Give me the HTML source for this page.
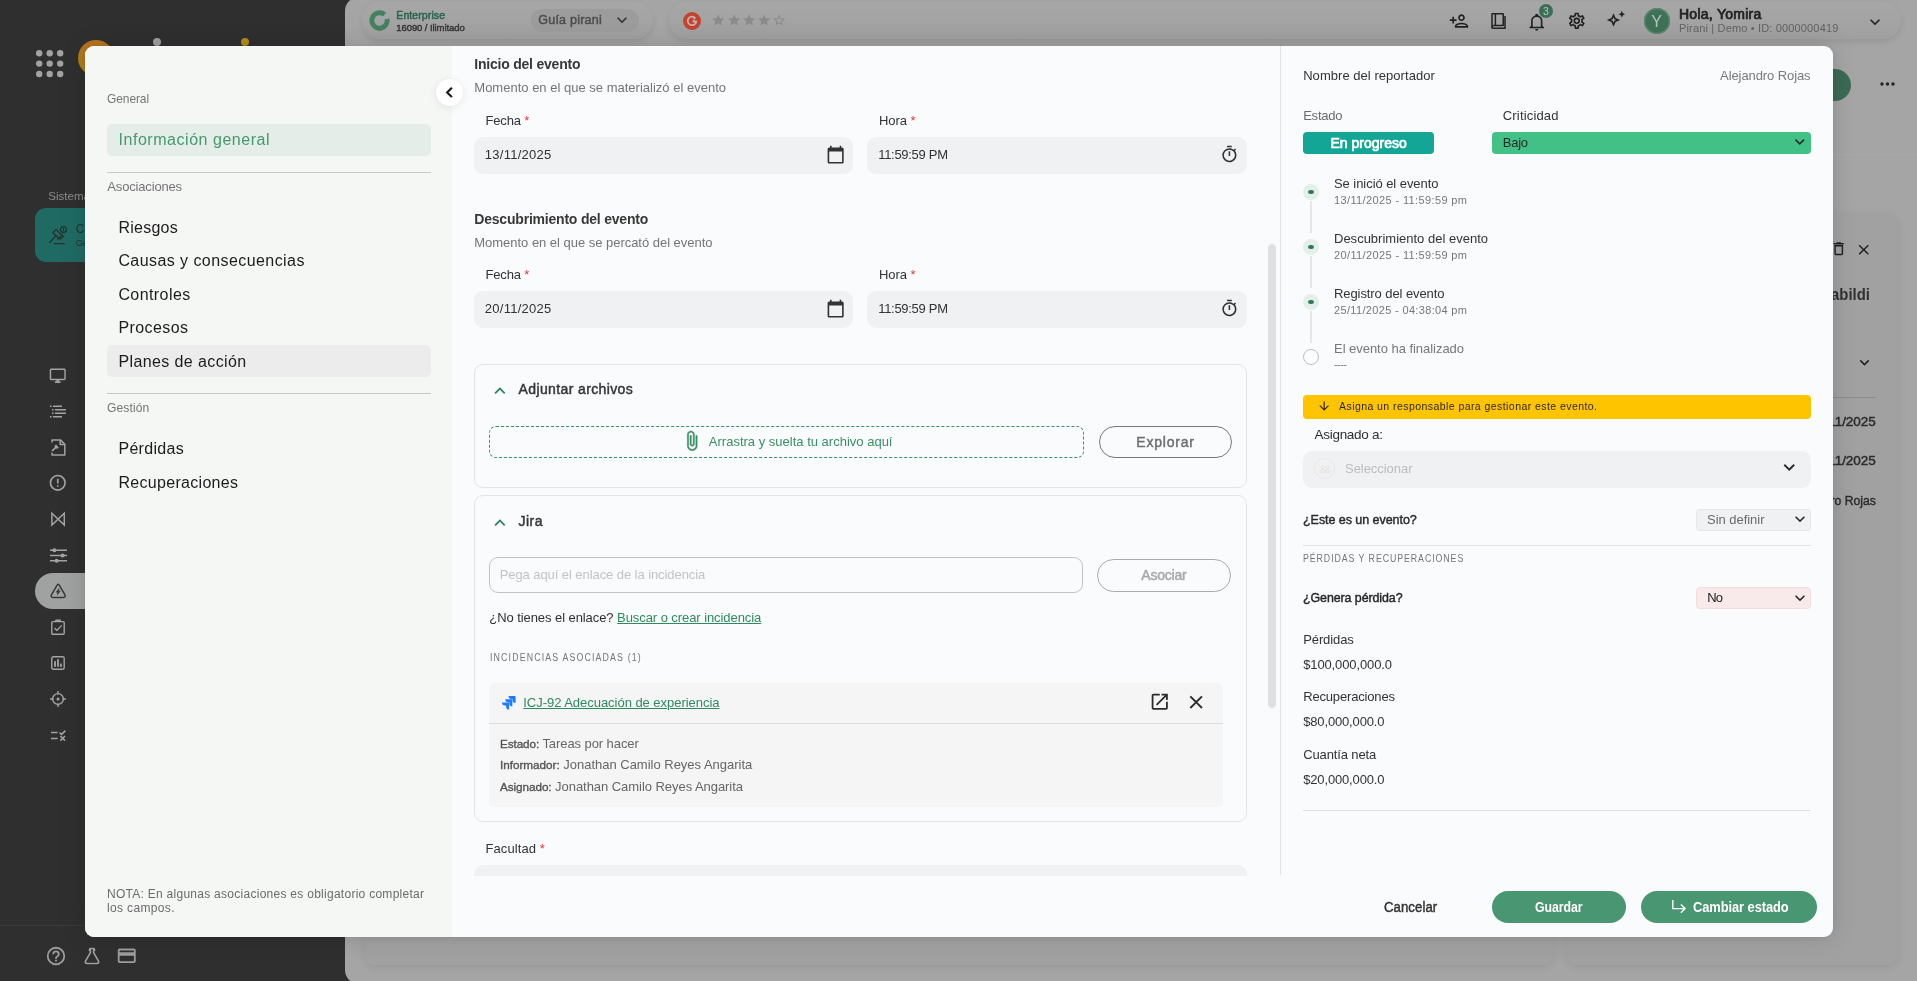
<!DOCTYPE html>
<html lang="es"><head><meta charset="utf-8"><title>Pirani - Evento</title>
<style>
*{box-sizing:border-box;margin:0;padding:0}
html,body{width:1917px;height:981px;overflow:hidden;background:#2f2f2f}
body{position:relative;font-family:"Liberation Sans",sans-serif;-webkit-font-smoothing:antialiased}
#app{position:absolute;left:0;top:0;width:1917px;height:981px;will-change:transform}
.layer{position:absolute;left:0;top:0;width:1917px;height:981px}
.t{position:absolute;white-space:nowrap;line-height:1;display:block}
.b{position:absolute}
.i{position:absolute;display:block;overflow:visible}
.r{color:#e53935}
a{color:inherit}
</style></head>
<body>
<div id="app">
<!-- ===== background app (dimmed by overlay) ===== -->
<div id="bg" class="layer" aria-hidden="true">
<div class="b" style="left:345px;top:-3px;width:1572px;height:987px;background:#a5a5a5;border-radius:14px 0 0 14px"></div>
<svg class="i" style="left:35.70px;top:50.00px;width:27.4px;height:27.2px;" viewBox="0 0 27.4 27.2"><g fill="#a2a2a2"><circle cx="3.2" cy="3.2" r="3.2"/><circle cx="13.7" cy="3.2" r="3.2"/><circle cx="24.2" cy="3.2" r="3.2"/><circle cx="3.2" cy="13.6" r="3.2"/><circle cx="13.7" cy="13.6" r="3.2"/><circle cx="24.2" cy="13.6" r="3.2"/><circle cx="3.2" cy="24" r="3.2"/><circle cx="13.7" cy="24" r="3.2"/><circle cx="24.2" cy="24" r="3.2"/></g></svg>
<div class="b" style="left:78px;top:40px;width:36px;height:36px;border-radius:50%;background:linear-gradient(180deg,#b8711f 0%,#b07a1c 45%,#a87e18 100%)"></div>
<div class="b" style="left:152.8px;top:37.6px;width:8.0px;height:8.0px;border-radius:50%;background:#a0a0a0"></div>
<div class="b" style="left:240.5px;top:37.6px;width:8.0px;height:8.0px;border-radius:50%;background:#b38c1d"></div>
<div class="b" style="left:35px;top:208px;width:295px;height:54px;background:#1f6b63;border-radius:11px"></div>
<svg class="i" style="left:49.20px;top:226.00px;width:18px;height:18px;" viewBox="0 0 18 18"><g fill="none" stroke="#26332f" stroke-width="1.3" stroke-linejoin="round" stroke-linecap="round"><path d="M0.6 16.6 L6.4 10.2"/><path d="M5 17.6 H15.4"/><path d="M7.2 3.6 L14.4 10.6 L11 13.2 L3.8 6.6 Z"/><path d="M8.6 13 L13 9.2"/><circle cx="14.4" cy="3.6" r="3"/><path d="M14.4 2.4 V4.8"/></g></svg>
<svg class="i" style="left:49.25px;top:366.55px;width:17.5px;height:17.5px;" viewBox="0 0 24 24"><path fill="#a3a3a3" d="M21,16H3V4H21M21,2H3C1.89,2 1,2.89 1,4V16A2,2 0 0,0 3,18H10V20H8V22H16V20H14V18H21A2,2 0 0,0 23,16V4C23,2.89 22.1,2 21,2Z"/></svg>
<svg class="i" style="left:49.50px;top:404.50px;width:17px;height:13px;" viewBox="0 0 17 13"><g stroke="#a3a3a3" stroke-width="1.5" fill="none"><path d="M3 1.2H12M5 4.7H16M5 8.2H16M3 11.7H12"/></g><g fill="#a3a3a3"><rect x="0" y="0.5" width="1.6" height="1.5"/><rect x="2" y="4" width="1.6" height="1.5"/><rect x="2" y="7.5" width="1.6" height="1.5"/><rect x="0" y="11" width="1.6" height="1.5"/></g></svg>
<svg class="i" style="left:50.50px;top:438.50px;width:15px;height:17px;" viewBox="0 0 15 17"><g stroke="#a3a3a3" stroke-width="1.5" fill="none" stroke-linejoin="round"><path d="M1 3.4V0.9H9.4L13.8 5.2V16H1V13.6"/><path d="M9.2 1V5.4H13.6"/></g><path fill="#a3a3a3" d="M0.4 11.6 L4 8 L3.2 7.2 L5 5.6 L7.8 8.4 L6 10 L5.2 9.2 L1.6 12.6 Z"/></svg>
<svg class="i" style="left:48.25px;top:473.25px;width:19.5px;height:19.5px;" viewBox="0 0 24 24"><path fill="#a3a3a3" d="M11,15H13V17H11V15M11,7H13V13H11V7M12,2C6.47,2 2,6.5 2,12A10,10 0 0,0 12,22A10,10 0 0,0 22,12A10,10 0 0,0 12,2M12,20A8,8 0 0,1 4,12A8,8 0 0,1 12,4A8,8 0 0,1 20,12A8,8 0 0,1 12,20Z"/></svg>
<svg class="i" style="left:50.90px;top:511.90px;width:14.2px;height:14.2px;" viewBox="0 0 14.2 14.2"><path d="M0.9 1.2 L13.3 13 V1.2 L0.9 13 Z" fill="none" stroke="#a3a3a3" stroke-width="1.5" stroke-linejoin="miter"/></svg>
<svg class="i" style="left:49.50px;top:547.50px;width:17px;height:15px;" viewBox="0 0 17 15"><g stroke="#a3a3a3" stroke-width="1.5"><path d="M0 2.2H17M0 7.5H17M0 12.8H17"/></g><g fill="#a3a3a3"><circle cx="4.4" cy="2.2" r="2"/><circle cx="12.6" cy="7.5" r="2"/><circle cx="6.6" cy="12.8" r="2"/></g></svg>
<div class="b" style="left:34.8px;top:572.8px;width:85.2px;height:36.10000000000002px;background:#a0a2a1;border-radius:18px 0 0 18px"></div>
<svg class="i" style="left:49.90px;top:583.20px;width:16.4px;height:15.4px;" viewBox="0 0 16.4 15.4"><path d="M7 2.3 Q8.2 0.4 9.4 2.3 L15 12 Q15.9 14.3 13.6 14.4 H2.8 Q0.5 14.3 1.4 12 Z" fill="none" stroke="#383838" stroke-width="1.5" stroke-linejoin="round"/><path d="M9 5.6 L6.2 9.2 H8 L7.3 11.9 L10.2 8.1 H8.4 Z" fill="#383838" stroke="#383838" stroke-width="0.6" stroke-linejoin="round"/></svg>
<svg class="i" style="left:51.00px;top:619.00px;width:14px;height:16px;" viewBox="0 0 14 16"><g stroke="#a3a3a3" stroke-width="1.4" fill="none" stroke-linejoin="round"><rect x="0.8" y="2.6" width="12.4" height="12.6" rx="1"/><path d="M4.8 2.4 V1.2 H9.2 V2.4"/><path d="M3.6 9 L6 11.4 L10.6 6.4"/></g></svg>
<svg class="i" style="left:51.00px;top:656.00px;width:14px;height:14px;" viewBox="0 0 14 14"><rect x="0.8" y="0.8" width="12.4" height="12.4" rx="1.4" fill="none" stroke="#a3a3a3" stroke-width="1.4"/><g fill="#a3a3a3"><rect x="3.2" y="5.2" width="1.8" height="5.6"/><rect x="6.1" y="3.2" width="1.8" height="7.6"/><rect x="9" y="7.6" width="1.8" height="3.2"/></g></svg>
<svg class="i" style="left:50.00px;top:691.00px;width:16px;height:16px;" viewBox="0 0 16 16"><g stroke="#a3a3a3" stroke-width="1.4" fill="none"><circle cx="8" cy="8" r="5.4"/><path d="M8 0V3.6M8 12.4V16M0 8H3.6M12.4 8H16"/></g><circle cx="8" cy="8" r="1.5" fill="#a3a3a3"/></svg>
<svg class="i" style="left:50.50px;top:729.50px;width:15px;height:11px;" viewBox="0 0 15 11"><g stroke="#a3a3a3" stroke-width="1.5" fill="none"><path d="M0 2.6H6.6M0 8.4H6.6"/><path d="M8.6 2.6 L10.6 4.4 L14.4 0.6"/><path d="M9.4 6 L14 10.6M14 6 L9.4 10.6"/></g></svg>
<div class="b" style="left:0px;top:924.5px;width:85px;height:1.0px;background:#3a3a3a"></div>
<svg class="i" style="left:45.20px;top:945.00px;width:22px;height:22px;" viewBox="0 0 24 24"><path fill="#9d9d9d" d="M11,18H13V16H11V18M12,2A10,10 0 0,0 2,12A10,10 0 0,0 12,22A10,10 0 0,0 22,12A10,10 0 0,0 12,2M12,20C7.59,20 4,16.41 4,12C4,7.59 7.59,4 12,4C16.41,4 20,7.59 20,12C20,16.41 16.41,20 12,20M12,6A4,4 0 0,0 8,10H10A2,2 0 0,1 12,8A2,2 0 0,1 14,10C14,12 11,11.75 11,15H13C13,12.75 16,12.5 16,10A4,4 0 0,0 12,6Z"/></svg>
<svg class="i" style="left:81.50px;top:946.00px;width:20px;height:20px;" viewBox="0 0 24 24"><path fill="#9d9d9d" d="M5,19A1,1 0 0,0 6,20H18A1,1 0 0,0 19,19C19,18.79 18.93,18.59 18.82,18.43L13,8.35V4H11V8.35L5.18,18.43C5.07,18.59 5,18.79 5,19M6,22A3,3 0 0,1 3,19C3,18.4 3.18,17.84 3.5,17.37L9,7.81V6A1,1 0 0,1 8,5V4A2,2 0 0,1 10,2H14A2,2 0 0,1 16,4V5A1,1 0 0,1 15,6V7.81L20.5,17.37C20.82,17.84 21,18.4 21,19A3,3 0 0,1 18,22H6Z"/></svg>
<svg class="i" style="left:115.75px;top:945.45px;width:21.5px;height:21.5px;" viewBox="0 0 24 24"><path fill="#9d9d9d" d="M20,8H4V6H20M20,18H4V12H20M20,4H4C2.89,4 2,4.89 2,6V18A2,2 0 0,0 4,20H20A2,2 0 0,0 22,18V6C22,4.89 21.1,4 20,4Z"/></svg>
<div class="b" style="left:361.7px;top:2.4px;width:291.59999999999997px;height:36.6px;background:linear-gradient(180deg,#a7a7a7,#a0a0a0);border-radius:19px;box-shadow:0 3px 7px rgba(0,0,0,.09)"></div>
<div class="b" style="left:669px;top:2.4px;width:1231.7px;height:36.6px;background:linear-gradient(180deg,#a7a7a7,#a0a0a0);border-radius:19px;box-shadow:0 3px 7px rgba(0,0,0,.09)"></div>
<svg class="i" style="left:368.50px;top:10.40px;width:21px;height:21px;" viewBox="0 0 21 21"><circle cx="10.5" cy="10.5" r="7.7" fill="none" stroke="#42805f" stroke-width="4.9" stroke-dasharray="43 5.4" transform="rotate(-12 10.5 10.5)"/><g stroke="#5c9c7e" stroke-width="0.5" opacity=".7"><path d="M4.2 4.6 L7 7.2M3.8 16 L6.8 13.6M16.6 16.4 L14 13.8"/></g></svg>
<div class="b" style="left:530.8px;top:9px;width:108.20000000000005px;height:22.7px;background:#9c9c9c;border-radius:12px"></div>
<svg class="i" style="left:611.70px;top:10.40px;width:20px;height:20px;" viewBox="0 0 24 24"><path fill="#333" d="M7.41,8.58L12,13.17L16.59,8.58L18,10L12,16L6,10L7.41,8.58Z"/></svg>
<div class="b" style="left:682.8px;top:11.6px;width:18.100000000000023px;height:18.1px;background:#c3432f;border-radius:50%"></div>
<svg class="i" style="left:685.90px;top:14.70px;width:12px;height:12px;" viewBox="0 0 12 12"><path d="M9.4 3.2 A4.3 4.3 0 1 0 10.3 6.6 H6.6" fill="none" stroke="#c9b3ae" stroke-width="1.7"/><path d="M7 3.9 C7.3 2.6 9 2.7 9 3.8 C9 4.5 7.6 4.9 7.2 5.7 H9.2" fill="none" stroke="#c9b3ae" stroke-width="0.9"/></svg>
<svg class="i" style="left:711.40px;top:13.00px;width:14.4px;height:14.4px;" viewBox="0 0 24 24"><path fill="#8a8a8a" d="M12,17.27L18.18,21L16.54,13.97L22,9.24L14.81,8.62L12,2L9.19,8.62L2,9.24L7.45,13.97L5.82,21L12,17.27Z"/></svg>
<svg class="i" style="left:726.60px;top:13.00px;width:14.4px;height:14.4px;" viewBox="0 0 24 24"><path fill="#8a8a8a" d="M12,17.27L18.18,21L16.54,13.97L22,9.24L14.81,8.62L12,2L9.19,8.62L2,9.24L7.45,13.97L5.82,21L12,17.27Z"/></svg>
<svg class="i" style="left:741.90px;top:13.00px;width:14.4px;height:14.4px;" viewBox="0 0 24 24"><path fill="#8a8a8a" d="M12,17.27L18.18,21L16.54,13.97L22,9.24L14.81,8.62L12,2L9.19,8.62L2,9.24L7.45,13.97L5.82,21L12,17.27Z"/></svg>
<svg class="i" style="left:757.10px;top:13.00px;width:14.4px;height:14.4px;" viewBox="0 0 24 24"><path fill="#8a8a8a" d="M12,17.27L18.18,21L16.54,13.97L22,9.24L14.81,8.62L12,2L9.19,8.62L2,9.24L7.45,13.97L5.82,21L12,17.27Z"/></svg>
<svg class="i" style="left:772.30px;top:13.00px;width:14.4px;height:14.4px;" viewBox="0 0 24 24"><path fill="#8a8a8a" d="M12,15.39L8.24,17.66L9.23,13.38L5.91,10.5L10.29,10.13L12,6.09L13.71,10.13L18.09,10.5L14.77,13.38L15.76,17.66M22,9.24L14.81,8.63L12,2L9.19,8.63L2,9.24L7.45,13.97L5.82,21L12,17.27L18.18,21L16.54,13.97L22,9.24Z"/></svg>
<svg class="i" style="left:1448.50px;top:10.50px;width:20px;height:20px;" viewBox="0 0 24 24"><path fill="#222" d="M15 12c2.21 0 4-1.79 4-4s-1.79-4-4-4-4 1.79-4 4 1.79 4 4 4zm0-6c1.1 0 2 .9 2 2s-.9 2-2 2-2-.9-2-2 .9-2 2-2zm0 8c-2.67 0-8 1.34-8 4v2h16v-2c0-2.66-5.33-4-8-4zm-6 4c.22-.72 3.31-2 6-2 2.7 0 5.8 1.29 6 2H9zm-3-3v-3h3v-2H6V7H4v3H1v2h3v3z"/></svg>
<svg class="i" style="left:1490.50px;top:12.50px;width:15px;height:16px;" viewBox="0 0 15 16"><g fill="none" stroke="#222" stroke-width="1.5" stroke-linejoin="round"><path d="M1 14.4V0.8H12.2V12.6H2.6"/><path d="M4.4 0.8V12.4"/><path d="M2.6 12.6 Q1 13 1 14.4 Q1 15.2 2.6 15.2 H14 V3"/></g></svg>
<svg class="i" style="left:1527.25px;top:11.75px;width:19.5px;height:19.5px;" viewBox="0 0 24 24"><path fill="#222" d="M10,21H14A2,2 0 0,1 12,23A2,2 0 0,1 10,21M21,19V20H3V19L5,17V11C5,7.9 7.03,5.17 10,4.29C10,4.19 10,4.1 10,4A2,2 0 0,1 12,2A2,2 0 0,1 14,4C14,4.1 14,4.19 14,4.29C16.97,5.17 19,7.9 19,11V17L21,19M17,11A5,5 0 0,0 12,6A5,5 0 0,0 7,11V18H17V11Z"/></svg>
<div class="b" style="left:1538.8px;top:3.8px;width:14.0px;height:14.0px;background:#3a6f56;border-radius:50%"></div>
<svg class="i" style="left:1566.75px;top:10.75px;width:19.5px;height:19.5px;" viewBox="0 0 24 24"><path fill="#222" d="M12,8A4,4 0 0,1 16,12A4,4 0 0,1 12,16A4,4 0 0,1 8,12A4,4 0 0,1 12,8M12,10A2,2 0 0,0 10,12A2,2 0 0,0 12,14A2,2 0 0,0 14,12A2,2 0 0,0 12,10M10,22C9.75,22 9.54,21.82 9.5,21.58L9.13,18.93C8.5,18.68 7.96,18.34 7.44,17.94L4.95,18.95C4.73,19.03 4.46,18.95 4.34,18.73L2.34,15.27C2.21,15.05 2.27,14.78 2.46,14.63L4.57,12.97L4.5,12L4.57,11L2.46,9.37C2.27,9.22 2.21,8.95 2.34,8.73L4.34,5.27C4.46,5.05 4.73,4.96 4.95,5.05L7.44,6.05C7.96,5.66 8.5,5.32 9.13,5.07L9.5,2.42C9.54,2.18 9.75,2 10,2H14C14.25,2 14.46,2.18 14.5,2.42L14.87,5.07C15.5,5.32 16.04,5.66 16.56,6.05L19.05,5.05C19.27,4.96 19.54,5.05 19.66,5.27L21.66,8.73C21.79,8.95 21.73,9.22 21.54,9.37L19.43,11L19.5,12L19.43,13L21.54,14.63C21.73,14.78 21.79,15.05 21.66,15.27L19.66,18.73C19.54,18.95 19.27,19.04 19.05,18.95L16.56,17.95C16.04,18.34 15.5,18.68 14.87,18.93L14.5,21.58C14.46,21.82 14.25,22 14,22H10M11.25,4L10.88,6.61C9.68,6.86 8.62,7.5 7.85,8.39L5.44,7.35L4.69,8.65L6.8,10.2C6.4,11.37 6.4,12.64 6.8,13.8L4.68,15.36L5.43,16.66L7.86,15.62C8.63,16.5 9.68,17.14 10.87,17.38L11.24,20H12.76L13.13,17.39C14.32,17.14 15.37,16.5 16.14,15.62L18.57,16.66L19.32,15.36L17.2,13.81C17.6,12.64 17.6,11.37 17.2,10.2L19.31,8.65L18.56,7.35L16.15,8.39C15.38,7.5 14.32,6.86 13.12,6.62L12.75,4H11.25Z"/></svg>
<svg class="i" style="left:1606.00px;top:9.50px;width:20px;height:20px;" viewBox="0 0 24 24"><path fill="#222" d="M9 4L11.5 9.5L17 12L11.5 14.5L9 20L6.5 14.5L1 12L6.5 9.5L9 4M9 8.83L8 11L5.83 12L8 13L9 15.17L10 13L12.17 12L10 11L9 8.83M19 9L17.74 6.26L15 5L17.74 3.75L19 1L20.25 3.75L23 5L20.25 6.26L19 9Z"/></svg>
<div class="b" style="left:1643.5px;top:8px;width:26.0px;height:26px;background:#3e7257;border-radius:50%;box-shadow:inset 0 0 0 1.2px #5d8a72"></div>
<svg class="i" style="left:1865.00px;top:12.00px;width:20px;height:20px;" viewBox="0 0 24 24"><path fill="#222" d="M7.41,8.58L12,13.17L16.59,8.58L18,10L12,16L6,10L7.41,8.58Z"/></svg>
<div class="b" style="left:1833px;top:154px;width:84px;height:1px;background:#a8a8a8"></div>
<div class="b" style="left:1803px;top:69px;width:48px;height:32px;background:#3b6b54;border-radius:16px"></div>
<svg class="i" style="left:1879.50px;top:82.30px;width:15px;height:4px;" viewBox="0 0 15 4"><g fill="#222"><circle cx="2" cy="2" r="1.7"/><circle cx="7.5" cy="2" r="1.7"/><circle cx="13" cy="2" r="1.7"/></g></svg>
<div class="b" style="left:1566.8px;top:216px;width:330.70000000000005px;height:748.6px;background:#a1a1a1;border-radius:9px;box-shadow:0 2px 9px rgba(0,0,0,.05),0 0 16px rgba(0,0,0,.035)"></div>
<svg class="i" style="left:1830.25px;top:240.45px;width:17.5px;height:17.5px;" viewBox="0 0 24 24"><path fill="#222" d="M6,19A2,2 0 0,0 8,21H16A2,2 0 0,0 18,19V7H6V19M8,9H16V19H8V9M15.5,4L14.5,3H9.5L8.5,4H5V6H19V4H15.5Z"/></svg>
<svg class="i" style="left:1854.75px;top:240.65px;width:17.5px;height:17.5px;" viewBox="0 0 24 24"><path fill="#222" d="M19,6.41L17.59,5L12,10.59L6.41,5L5,6.41L10.59,12L5,17.59L6.41,19L12,13.41L17.59,19L19,17.59L13.41,12L19,6.41Z"/></svg>
<svg class="i" style="left:1854.50px;top:352.50px;width:19px;height:19px;" viewBox="0 0 24 24"><path fill="#222" d="M7.41,8.58L12,13.17L16.59,8.58L18,10L12,16L6,10L7.41,8.58Z"/></svg>
<div class="b" style="left:1833px;top:397px;width:43px;height:1px;background:#8c8c8c"></div>
<div class="b" style="left:364.5px;top:216px;width:1188.5px;height:748.6px;background:#a1a1a1;border-radius:9px;box-shadow:0 2px 9px rgba(0,0,0,.05),0 0 16px rgba(0,0,0,.035)"></div>
<span class="t" id="bg-sistema" style="left:48.30px;top:191.00px;font-size:11.5px;font-weight:400;color:#8c8c8c;letter-spacing:0.026px;">Sistema</span>
<span class="t" id="bg-c" style="left:75.80px;top:223.01px;font-size:12px;font-weight:400;color:#26332f;letter-spacing:-0.472px;">C</span>
<span class="t" id="bg-ge" style="left:75.80px;top:238.01px;font-size:9.5px;font-weight:400;color:#26332f;letter-spacing:-0.487px;">Ge</span>
<span class="t" id="bg-ent" style="left:396.30px;top:10.01px;font-size:10.5px;font-weight:400;color:#27634b;letter-spacing:0.093px;-webkit-text-stroke:0.45px currentColor;">Enterprise</span>
<span class="t" id="bg-lim" style="left:396.30px;top:23.01px;font-size:9.5px;font-weight:400;color:#383838;letter-spacing:-0.082px;-webkit-text-stroke:0.45px currentColor;">16090 / Ilimitado</span>
<span class="t" id="bg-guia" style="left:538.30px;top:14.00px;font-size:12.5px;font-weight:400;color:#4c4c4c;letter-spacing:0.224px;-webkit-text-stroke:0.45px currentColor;">Guía pirani</span>
<span class="t" id="bg-3" style="left:1543.00px;top:6.01px;font-size:10.5px;font-weight:400;color:#b9c4be;letter-spacing:-0.244px;">3</span>
<span class="t" id="bg-y" style="left:1651.20px;top:14.00px;font-size:16px;font-weight:400;color:#b4c4bc;letter-spacing:0.128px;">Y</span>
<span class="t" id="bg-hola" style="left:1679.00px;top:7.01px;font-size:14px;font-weight:400;color:#222;letter-spacing:0.264px;-webkit-text-stroke:0.7px currentColor;">Hola, Yomira</span>
<span class="t" id="bg-pir" style="left:1679.00px;top:23.00px;font-size:11px;font-weight:400;color:#636363;letter-spacing:0.159px;">Pirani | Demo • ID: 0000000419</span>
<span class="t" id="bg-abil" style="left:1797.00px;top:287.00px;font-size:16px;font-weight:700;color:#303030;letter-spacing:0.029px;transform:scaleX(0.93);transform-origin:0 0;">Probabildi</span>
<span class="t" id="bg-d1" style="left:1809.50px;top:415.01px;font-size:13.5px;font-weight:400;color:#2c2c2c;letter-spacing:-0.031px;-webkit-text-stroke:0.45px currentColor;">25/11/2025</span>
<span class="t" id="bg-d2" style="left:1809.50px;top:454.01px;font-size:13.5px;font-weight:400;color:#2c2c2c;letter-spacing:-0.031px;-webkit-text-stroke:0.45px currentColor;">25/11/2025</span>
<span class="t" id="bg-rojas" style="left:1790.00px;top:494.01px;font-size:13.5px;font-weight:400;color:#2c2c2c;letter-spacing:0.001px;-webkit-text-stroke:0.45px currentColor;transform:scaleX(0.9);transform-origin:0 0;">Alejandro Rojas</span>
</div>
<!-- ===== modal dialog: left nav | form | status column | footer ===== -->
<div id="modal" class="layer" role="dialog" aria-modal="true">
<div class="b" style="left:85px;top:46px;width:1747.5px;height:890.7px;background:#fafbfd;border-radius:9px;box-shadow:0 0 26px rgba(0,0,0,.13),0 1px 5px rgba(0,0,0,.05)"></div>
<div class="b" style="left:85px;top:46px;width:366.5px;height:890.7px;background:#f5f7f5;border-radius:9px 0 0 9px"></div>
<div class="b" style="left:107px;top:124px;width:323.5px;height:32px;background:#e4ede8;border-radius:5px"></div>
<div class="b" style="left:107px;top:172px;width:323.5px;height:1px;background:#c9cac9"></div>
<div class="b" style="left:107px;top:345px;width:323.5px;height:32px;background:#ebeceb;border-radius:5px"></div>
<div class="b" style="left:107px;top:393px;width:323.5px;height:1px;background:#c6c7c6"></div>
<div class="b" style="left:436px;top:78.9px;width:27.19999999999999px;height:27.19999999999999px;background:#fff;border-radius:50%;box-shadow:0 2px 10px rgba(0,0,0,.07),0 0 3px rgba(0,0,0,.04)"></div>
<svg class="i" style="left:439.35px;top:81.60px;width:20.8px;height:20.8px;stroke:#111;stroke-width:0.5px" viewBox="0 0 24 24"><path fill="#111" d="M15.41,16.58L10.83,12L15.41,7.41L14,6L8,12L14,18L15.41,16.58Z"/></svg>
<div class="b" style="left:474px;top:137.1px;width:378.9px;height:36.599999999999994px;background:#f0f1f3;border-radius:9px"></div>
<div class="b" style="left:867.1px;top:137.1px;width:379.9999999999999px;height:36.599999999999994px;background:#f0f1f3;border-radius:9px"></div>
<svg class="i" style="left:826.25px;top:144.95px;width:19.3px;height:19.3px;" viewBox="0 0 24 24"><path fill="#333" d="M20 3h-1V1h-2v2H7V1H5v2H4c-1.1 0-2 .9-2 2v16c0 1.1.9 2 2 2h16c1.1 0 2-.9 2-2V5c0-1.1-.9-2-2-2zm0 18H4V8h16v13z"/></svg>
<svg class="i" style="left:1220.00px;top:145.25px;width:18.8px;height:18.8px;" viewBox="0 0 24 24"><path fill="#333" d="M12,20A7,7 0 0,1 5,13A7,7 0 0,1 12,6A7,7 0 0,1 19,13A7,7 0 0,1 12,20M19.03,7.39L20.45,5.97C20,5.46 19.55,5 19.04,4.56L17.62,6C16.07,4.74 14.12,4 12,4A9,9 0 0,0 3,13A9,9 0 0,0 12,22C17,22 21,17.97 21,13C21,10.88 20.26,8.93 19.03,7.39M11,14H13V8H11M15,1H9V3H15V1Z"/></svg>
<div class="b" style="left:474px;top:291.3px;width:378.9px;height:36.599999999999966px;background:#f0f1f3;border-radius:9px"></div>
<div class="b" style="left:867.1px;top:291.3px;width:379.9999999999999px;height:36.599999999999966px;background:#f0f1f3;border-radius:9px"></div>
<svg class="i" style="left:826.25px;top:299.15px;width:19.3px;height:19.3px;" viewBox="0 0 24 24"><path fill="#333" d="M20 3h-1V1h-2v2H7V1H5v2H4c-1.1 0-2 .9-2 2v16c0 1.1.9 2 2 2h16c1.1 0 2-.9 2-2V5c0-1.1-.9-2-2-2zm0 18H4V8h16v13z"/></svg>
<svg class="i" style="left:1220.00px;top:299.45px;width:18.8px;height:18.8px;" viewBox="0 0 24 24"><path fill="#333" d="M12,20A7,7 0 0,1 5,13A7,7 0 0,1 12,6A7,7 0 0,1 19,13A7,7 0 0,1 12,20M19.03,7.39L20.45,5.97C20,5.46 19.55,5 19.04,4.56L17.62,6C16.07,4.74 14.12,4 12,4A9,9 0 0,0 3,13A9,9 0 0,0 12,22C17,22 21,17.97 21,13C21,10.88 20.26,8.93 19.03,7.39M11,14H13V8H11M15,1H9V3H15V1Z"/></svg>
<div class="b" style="left:474.3px;top:364px;width:772.7px;height:124px;border:1px solid #e3e4e6;border-radius:9px"></div>
<svg class="i" style="left:488.75px;top:380.40px;width:21.8px;height:21.8px;" viewBox="0 0 24 24"><path fill="#2a8558" d="M7.41,15.41L12,10.83L16.59,15.41L18,14L12,8L6,14L7.41,15.41Z"/></svg>
<div class="b" style="left:489px;top:426px;width:594.9000000000001px;height:32px;border:1px dashed #3a8f66;border-radius:7px"></div>
<svg class="i" style="left:680.70px;top:430.30px;width:21.6px;height:21.6px;stroke:#3a8f66;stroke-width:0.5px" viewBox="0 0 24 24"><path fill="#3a8f66" d="M16.5 6v11.5c0 2.21-1.79 4-4 4s-4-1.79-4-4V5c0-1.38 1.12-2.5 2.5-2.5s2.5 1.12 2.5 2.5v10.5c0 .55-.45 1-1 1s-1-.45-1-1V6H10v9.5c0 1.38 1.12 2.5 2.5 2.5s2.5-1.12 2.5-2.5V5c0-2.21-1.79-4-4-4S7 2.79 7 5v12.5c0 3.04 2.46 5.5 5.5 5.5s5.5-2.46 5.5-5.5V6h-1.5z"/></svg>
<div class="b" style="left:1098.9px;top:426px;width:133.19999999999982px;height:32px;border:1px solid #787878;border-radius:16px"></div>
<div class="b" style="left:474.3px;top:495px;width:772.7px;height:327px;border:1px solid #e3e4e6;border-radius:9px"></div>
<svg class="i" style="left:488.75px;top:512.40px;width:21.8px;height:21.8px;" viewBox="0 0 24 24"><path fill="#2a8558" d="M7.41,15.41L12,10.83L16.59,15.41L18,14L12,8L6,14L7.41,15.41Z"/></svg>
<div class="b" style="left:489px;top:557px;width:594px;height:36px;border:1px solid #c2c2c2;border-radius:9px"></div>
<div class="b" style="left:1097px;top:559px;width:134px;height:33px;border:1px solid #a9a9a9;border-radius:17px"></div>
<div class="b" style="left:489.2px;top:683.2px;width:733.8999999999999px;height:123.5px;background:#f5f5f5;border-radius:5px"></div>
<div class="b" style="left:489.2px;top:722.8px;width:733.8999999999999px;height:1.0px;background:#dcdcdc"></div>
<svg class="i" style="left:502.40px;top:695.80px;width:13.6px;height:13.6px;" viewBox="0 0 24 24"><path fill="#2079ff" d="M11.571 11.513H0a5.218 5.218 0 0 0 5.232 5.215h2.13v2.057A5.215 5.215 0 0 0 12.575 24V12.518a1.005 1.005 0 0 0-1.005-1.005zm5.723-5.756H5.736a5.215 5.215 0 0 0 5.215 5.214h2.129v2.058a5.218 5.218 0 0 0 5.215 5.214V6.758a1.001 1.001 0 0 0-1.001-1.001zM23.013 0H11.455a5.215 5.215 0 0 0 5.215 5.215h2.129v2.057A5.215 5.215 0 0 0 24 12.483V1.005A1.001 1.001 0 0 0 23.013 0Z"/></svg>
<svg class="i" style="left:1148.85px;top:691.15px;width:21.5px;height:21.5px;" viewBox="0 0 24 24"><path fill="#2b2b2b" d="M14,3V5H17.59L7.76,14.83L9.17,16.24L19,6.41V10H21V3M19,19H5V5H12V3H5C3.89,3 3,3.9 3,5V19A2,2 0 0,0 5,21H19A2,2 0 0,0 21,19V12H19V19Z"/></svg>
<svg class="i" style="left:1185.25px;top:690.95px;width:22.3px;height:22.3px;" viewBox="0 0 24 24"><path fill="#2b2b2b" d="M19,6.41L17.59,5L12,10.59L6.41,5L5,6.41L10.59,12L5,17.59L6.41,19L12,13.41L17.59,19L19,17.59L13.41,12L19,6.41Z"/></svg>
<div class="b" style="left:474px;top:864.5px;width:773.0999999999999px;height:11.299999999999955px;background:#f0f1f3;border-radius:9px 9px 0 0"></div>
<div class="b" style="left:1268px;top:243.8px;width:8px;height:463.8px;background:#e0e0e0;border-radius:4px"></div>
<div class="b" style="left:1280px;top:46px;width:1px;height:829px;background:#e2e3e5"></div>
<div class="b" style="left:1302.8px;top:132px;width:131.0px;height:21.80000000000001px;background:#13a595;border-radius:4px"></div>
<div class="b" style="left:1491.5px;top:132px;width:319.0999999999999px;height:21.80000000000001px;background:#41c185;border-radius:4px"></div>
<svg class="i" style="left:1790.05px;top:132.35px;width:19.5px;height:19.5px;" viewBox="0 0 24 24"><path fill="#2b2b2b" d="M7.41,8.58L12,13.17L16.59,8.58L18,10L12,16L6,10L7.41,8.58Z"/></svg>
<div class="b" style="left:1310.2px;top:201.3px;width:1.599999999999909px;height:32.099999999999994px;background:#e5e6e8"></div>
<div class="b" style="left:1310.2px;top:256.1px;width:1.599999999999909px;height:32.099999999999966px;background:#e5e6e8"></div>
<div class="b" style="left:1310.2px;top:310.9px;width:1.599999999999909px;height:32.5px;background:#e5e6e8"></div>
<div class="b" style="left:1303px;top:183.9px;width:16px;height:16.0px;background:#e4efe9;border-radius:50%"></div>
<div class="b" style="left:1308.4px;top:189.9px;width:5.199999999999818px;height:4.0px;background:#2d7a54;border-radius:50%"></div>
<div class="b" style="left:1303px;top:238.7px;width:16px;height:16.0px;background:#e4efe9;border-radius:50%"></div>
<div class="b" style="left:1308.4px;top:244.7px;width:5.199999999999818px;height:4.0px;background:#2d7a54;border-radius:50%"></div>
<div class="b" style="left:1303px;top:293.5px;width:16px;height:16.0px;background:#e4efe9;border-radius:50%"></div>
<div class="b" style="left:1308.4px;top:299.5px;width:5.199999999999818px;height:4.0px;background:#2d7a54;border-radius:50%"></div>
<div class="b" style="left:1303px;top:348.6px;width:16px;height:16.0px;background:#fdfdfe;border:1px solid #bdbdbd;border-radius:50%"></div>
<div class="b" style="left:1302.8px;top:394.5px;width:507.79999999999995px;height:24.0px;background:#ffc400;border-radius:4px"></div>
<svg class="i" style="left:1317.45px;top:398.65px;width:14.3px;height:14.3px;" viewBox="0 0 24 24"><path fill="#2b2b2b" d="M11,4H13V16L18.5,10.5L19.92,11.92L12,19.84L4.08,11.92L5.5,10.5L11,16V4Z"/></svg>
<div class="b" style="left:1302.8px;top:450.9px;width:507.79999999999995px;height:36.900000000000034px;background:#f0f1f3;border-radius:9px"></div>
<div class="b" style="left:1314.4px;top:458.2px;width:21.0px;height:21.0px;background:#f1f1f2;border:1.5px solid #e7e7e9;border-radius:50%"></div>
<svg class="i" style="left:1318.90px;top:462.90px;width:12px;height:12px;" viewBox="0 0 24 24"><path fill="#dedee0" d="M16.5 13c-1.2 0-3.07.34-4.5 1-1.43-.67-3.3-1-4.5-1C5.33 13 1 14.08 1 16.25V19h22v-2.75c0-2.17-4.33-3.25-6.500-3.25zm-4 4.500h-10v-1.250c0-.54 2.560-1.750 5-1.750s5 1.210 5 1.750v1.250zm9 0H14v-1.250c0-.46-.2-.86-.52-1.220.88-.3 1.960-.53 3.020-.53 2.440 0 5 1.210 5 1.750v1.250zM7.500 12c1.930 0 3.500-1.570 3.500-3.500S9.430 5 7.500 5 4 6.570 4 8.500 5.570 12 7.500 12zm0-5.500c1.100 0 2 .9 2 2s-.9 2-2 2-2-.9-2-2 .9-2 2-2zm9 5.500c1.930 0 3.500-1.570 3.500-3.500S18.430 5 16.500 5 13 6.570 13 8.500s1.570 3.500 3.500 3.500zm0-5.500c1.100 0 2 .9 2 2s-.9 2-2 2-2-.9-2-2 .9-2 2-2z"/></svg>
<svg class="i" style="left:1777.65px;top:456.45px;width:22.5px;height:22.5px;" viewBox="0 0 24 24"><path fill="#2b2b2b" d="M7.41,8.58L12,13.17L16.59,8.58L18,10L12,16L6,10L7.41,8.58Z"/></svg>
<div class="b" style="left:1695.8px;top:508.8px;width:114.79999999999995px;height:21.80000000000001px;background:#f0f1f3;border:1px solid #e5e6e8;border-radius:4px"></div>
<svg class="i" style="left:1789.80px;top:509.40px;width:20px;height:20px;" viewBox="0 0 24 24"><path fill="#2b2b2b" d="M7.41,8.58L12,13.17L16.59,8.58L18,10L12,16L6,10L7.41,8.58Z"/></svg>
<div class="b" style="left:1302.8px;top:545px;width:507.79999999999995px;height:1px;background:#e0e1e3"></div>
<div class="b" style="left:1695.8px;top:587px;width:114.79999999999995px;height:21.799999999999955px;background:#f8eaea;border:1px solid #f6dcdc;border-radius:4px"></div>
<svg class="i" style="left:1789.80px;top:587.60px;width:20px;height:20px;" viewBox="0 0 24 24"><path fill="#2b2b2b" d="M7.41,8.58L12,13.17L16.59,8.58L18,10L12,16L6,10L7.41,8.58Z"/></svg>
<div class="b" style="left:1302.8px;top:810.4px;width:507.79999999999995px;height:1.0px;background:#dfe0e2"></div>
<div class="b" style="left:1492px;top:891px;width:133.79999999999995px;height:31.799999999999955px;background:#499672;border-radius:16px"></div>
<div class="b" style="left:1640.8px;top:891px;width:176.70000000000005px;height:31.799999999999955px;background:#499672;border-radius:16px"></div>
<svg class="i" style="left:1672.40px;top:899.50px;width:14px;height:13px;" viewBox="0 0 14 13"><path d="M0.8 0 V8.6 H13 M8.9 4.4 L13.1 8.6 L8.9 12.8" fill="none" stroke="#fff" stroke-width="1.35"/></svg>
<span class="t" id="m-general" style="left:107.30px;top:92.00px;font-size:13px;font-weight:400;color:#757575;letter-spacing:-0.082px;transform:scaleX(0.92);transform-origin:0 0;">General</span>
<span class="t" id="m-info" style="left:118.50px;top:132.00px;font-size:16px;font-weight:400;color:#45996f;letter-spacing:0.538px;">Información general</span>
<span class="t" id="m-asoc" style="left:107.30px;top:180.00px;font-size:13px;font-weight:400;color:#757575;letter-spacing:-0.164px;">Asociaciones</span>
<span class="t" id="m-riesgos" style="left:118.40px;top:220.00px;font-size:16px;font-weight:400;color:#1c1c1c;letter-spacing:0.248px;">Riesgos</span>
<span class="t" id="m-causas" style="left:118.40px;top:253.00px;font-size:16px;font-weight:400;color:#1c1c1c;letter-spacing:0.429px;">Causas y consecuencias</span>
<span class="t" id="m-controles" style="left:118.40px;top:287.00px;font-size:16px;font-weight:400;color:#1c1c1c;letter-spacing:0.421px;">Controles</span>
<span class="t" id="m-procesos" style="left:118.40px;top:320.00px;font-size:16px;font-weight:400;color:#1c1c1c;letter-spacing:0.414px;">Procesos</span>
<span class="t" id="m-planes" style="left:118.40px;top:354.00px;font-size:16px;font-weight:400;color:#1c1c1c;letter-spacing:0.399px;">Planes de acción</span>
<span class="t" id="m-gestion" style="left:107.30px;top:401.00px;font-size:13px;font-weight:400;color:#757575;letter-spacing:0.094px;transform:scaleX(0.93);transform-origin:0 0;">Gestión</span>
<span class="t" id="m-perdidas" style="left:118.40px;top:441.00px;font-size:16px;font-weight:400;color:#1c1c1c;letter-spacing:0.313px;">Pérdidas</span>
<span class="t" id="m-recup" style="left:118.40px;top:475.00px;font-size:16px;font-weight:400;color:#1c1c1c;letter-spacing:0.306px;">Recuperaciones</span>
<span class="t" id="m-nota1" style="left:107.00px;top:888.01px;font-size:12px;font-weight:400;color:#6b6b6b;letter-spacing:0.272px;">NOTA: En algunas asociaciones es obligatorio completar</span>
<span class="t" id="m-nota2" style="left:107.00px;top:902.00px;font-size:12px;font-weight:400;color:#6b6b6b;letter-spacing:0.347px;">los campos.</span>
<span class="t" id="m-inicio" style="left:474.30px;top:57.01px;font-size:14px;font-weight:700;color:#383838;letter-spacing:-0.219px;">Inicio del evento</span>
<span class="t" id="m-mom1" style="left:474.30px;top:81.00px;font-size:13px;font-weight:400;color:#757575;letter-spacing:0.005px;">Momento en el que se materializó el evento</span>
<span class="t" id="m-fecha1" style="left:485.50px;top:114.00px;font-size:13px;font-weight:400;color:#333;letter-spacing:-0.169px;">Fecha <span class="r">*</span></span>
<span class="t" id="m-hora1" style="left:879.00px;top:114.00px;font-size:13px;font-weight:400;color:#333;letter-spacing:-0.072px;">Hora <span class="r">*</span></span>
<span class="t" id="m-d1" style="left:484.80px;top:148.00px;font-size:13px;font-weight:400;color:#333;letter-spacing:0.266px;">13/11/2025</span>
<span class="t" id="m-h1" style="left:878.20px;top:148.00px;font-size:13px;font-weight:400;color:#333;letter-spacing:-0.297px;">11:59:59 PM</span>
<span class="t" id="m-desc" style="left:474.30px;top:212.01px;font-size:14px;font-weight:700;color:#383838;letter-spacing:-0.206px;">Descubrimiento del evento</span>
<span class="t" id="m-mom2" style="left:474.30px;top:236.00px;font-size:13px;font-weight:400;color:#757575;letter-spacing:-0.027px;">Momento en el que se percató del evento</span>
<span class="t" id="m-fecha2" style="left:485.50px;top:268.00px;font-size:13px;font-weight:400;color:#333;letter-spacing:-0.169px;">Fecha <span class="r">*</span></span>
<span class="t" id="m-hora2" style="left:879.00px;top:268.00px;font-size:13px;font-weight:400;color:#333;letter-spacing:-0.072px;">Hora <span class="r">*</span></span>
<span class="t" id="m-d2" style="left:484.80px;top:302.00px;font-size:13px;font-weight:400;color:#333;letter-spacing:0.266px;">20/11/2025</span>
<span class="t" id="m-h2" style="left:878.20px;top:302.00px;font-size:13px;font-weight:400;color:#333;letter-spacing:-0.297px;">11:59:59 PM</span>
<span class="t" id="m-adj" style="left:518.50px;top:382.01px;font-size:14px;font-weight:400;color:#353535;letter-spacing:0.383px;-webkit-text-stroke:0.45px currentColor;">Adjuntar archivos</span>
<span class="t" id="m-arr" style="left:708.80px;top:435.00px;font-size:13px;font-weight:400;color:#3a8f66;letter-spacing:0.005px;">Arrastra y suelta tu archivo aquí</span>
<span class="t" id="m-expl" style="left:1136.30px;top:435.00px;font-size:14px;font-weight:400;color:#6e6e6e;letter-spacing:0.794px;-webkit-text-stroke:0.45px currentColor;">Explorar</span>
<span class="t" id="m-jira" style="left:518.50px;top:514.01px;font-size:14px;font-weight:400;color:#353535;letter-spacing:0.479px;-webkit-text-stroke:0.45px currentColor;">Jira</span>
<span class="t" id="m-pega" style="left:499.70px;top:568.00px;font-size:13px;font-weight:400;color:#c3c3c3;letter-spacing:-0.073px;">Pega aquí el enlace de la incidencia</span>
<span class="t" id="m-asociar" style="left:1141.30px;top:568.01px;font-size:14px;font-weight:400;color:#a8a8a8;letter-spacing:-0.215px;-webkit-text-stroke:0.45px currentColor;">Asociar</span>
<span class="t" id="m-notienes" style="left:489.30px;top:611.00px;font-size:13px;font-weight:400;color:#303030;letter-spacing:-0.072px;">¿No tienes el enlace? <a style="color:#2e8b5e;text-decoration:underline">Buscar o crear incidencia</a></span>
<span class="t" id="m-incid" style="left:489.70px;top:653.02px;font-size:10px;font-weight:400;color:#757575;letter-spacing:1.301px;transform:scaleX(0.88);transform-origin:0 0;">INCIDENCIAS ASOCIADAS (1)</span>
<span class="t" id="m-icj" style="left:523.30px;top:696.00px;font-size:13px;font-weight:400;color:#2e8b5e;letter-spacing:-0.035px;"><a style="text-decoration:underline">ICJ-92 Adecuación de experiencia</a></span>
<span class="t" id="m-estado" style="left:500.00px;top:737.00px;font-size:13px;font-weight:400;color:#666;letter-spacing:-0.077px;"><b style="font-size:11.7px;font-weight:400;-webkit-text-stroke:0.35px #555;color:#555">Estado:</b> Tareas por hacer</span>
<span class="t" id="m-inform" style="left:500.00px;top:758.00px;font-size:13px;font-weight:400;color:#666;letter-spacing:-0.010px;"><b style="font-size:11.7px;font-weight:400;-webkit-text-stroke:0.35px #555;color:#555">Informador:</b> Jonathan Camilo Reyes Angarita</span>
<span class="t" id="m-asign" style="left:500.00px;top:780.00px;font-size:13px;font-weight:400;color:#666;letter-spacing:-0.050px;"><b style="font-size:11.7px;font-weight:400;-webkit-text-stroke:0.35px #555;color:#555">Asignado:</b> Jonathan Camilo Reyes Angarita</span>
<span class="t" id="m-facultad" style="left:485.50px;top:842.00px;font-size:13px;font-weight:400;color:#333;letter-spacing:0.084px;">Facultad <span class="r">*</span></span>
<span class="t" id="m-nombre" style="left:1303.20px;top:69.00px;font-size:13px;font-weight:400;color:#333;letter-spacing:0.040px;">Nombre del reportador</span>
<span class="t" id="m-alej" style="left:1720.10px;top:69.00px;font-size:13px;font-weight:400;color:#7a7a7a;letter-spacing:-0.092px;">Alejandro Rojas</span>
<span class="t" id="m-est" style="left:1303.20px;top:109.00px;font-size:13px;font-weight:400;color:#6b6b6b;letter-spacing:-0.237px;">Estado</span>
<span class="t" id="m-crit" style="left:1502.80px;top:109.00px;font-size:13px;font-weight:400;color:#333;letter-spacing:0.168px;">Criticidad</span>
<span class="t" id="m-enprog" style="left:1330.50px;top:136.01px;font-size:14px;font-weight:400;color:#fff;letter-spacing:0.012px;-webkit-text-stroke:0.7px currentColor;">En progreso</span>
<span class="t" id="m-bajo" style="left:1502.80px;top:136.00px;font-size:13px;font-weight:400;color:#2b2b2b;letter-spacing:-0.277px;">Bajo</span>
<span class="t" id="m-tl1" style="left:1334.00px;top:177.00px;font-size:13px;font-weight:400;color:#333;letter-spacing:-0.056px;">Se inició el evento</span>
<span class="t" id="m-tl1d" style="left:1334.00px;top:195.00px;font-size:11px;font-weight:400;color:#777;letter-spacing:0.376px;">13/11/2025 - 11:59:59 pm</span>
<span class="t" id="m-tl2" style="left:1334.00px;top:232.00px;font-size:13px;font-weight:400;color:#333;letter-spacing:0.003px;">Descubrimiento del evento</span>
<span class="t" id="m-tl2d" style="left:1334.00px;top:250.00px;font-size:11px;font-weight:400;color:#777;letter-spacing:0.376px;">20/11/2025 - 11:59:59 pm</span>
<span class="t" id="m-tl3" style="left:1334.00px;top:287.00px;font-size:13px;font-weight:400;color:#333;letter-spacing:-0.084px;">Registro del evento</span>
<span class="t" id="m-tl3d" style="left:1334.00px;top:305.00px;font-size:11px;font-weight:400;color:#777;letter-spacing:0.340px;">25/11/2025 - 04:38:04 pm</span>
<span class="t" id="m-tl4" style="left:1334.00px;top:342.00px;font-size:13px;font-weight:400;color:#777;letter-spacing:-0.037px;">El evento ha finalizado</span>
<span class="t" id="m-tl4d" style="left:1334.00px;top:359.00px;font-size:11px;font-weight:400;color:#777;letter-spacing:-0.552px;">----</span>
<span class="t" id="m-asigna" style="left:1339.00px;top:401.01px;font-size:10.5px;font-weight:400;color:#2b2b2b;letter-spacing:0.438px;">Asigna un responsable para gestionar este evento.</span>
<span class="t" id="m-asignado" style="left:1314.50px;top:428.01px;font-size:13.5px;font-weight:400;color:#303030;letter-spacing:-0.281px;">Asignado a:</span>
<span class="t" id="m-selec" style="left:1345.00px;top:462.00px;font-size:13px;font-weight:400;color:#bdbdbd;letter-spacing:-0.044px;">Seleccionar</span>
<span class="t" id="m-este" style="left:1303.20px;top:513.01px;font-size:13.5px;font-weight:400;color:#2b2b2b;letter-spacing:-0.081px;-webkit-text-stroke:0.45px currentColor;transform:scaleX(0.93);transform-origin:0 0;">¿Este es un evento?</span>
<span class="t" id="m-sindef" style="left:1707.00px;top:513.00px;font-size:13px;font-weight:400;color:#6b6b6b;letter-spacing:-0.031px;">Sin definir</span>
<span class="t" id="m-pyr" style="left:1303.20px;top:554.02px;font-size:10px;font-weight:400;color:#757575;letter-spacing:1.052px;transform:scaleX(0.88);transform-origin:0 0;">PÉRDIDAS Y RECUPERACIONES</span>
<span class="t" id="m-genera" style="left:1303.20px;top:591.01px;font-size:13.5px;font-weight:400;color:#262626;letter-spacing:-0.088px;-webkit-text-stroke:0.45px currentColor;transform:scaleX(0.92);transform-origin:0 0;">¿Genera pérdida?</span>
<span class="t" id="m-no" style="left:1707.30px;top:591.00px;font-size:13px;font-weight:400;color:#222;letter-spacing:-0.925px;">No</span>
<span class="t" id="m-perd2" style="left:1303.20px;top:633.00px;font-size:13px;font-weight:400;color:#333;letter-spacing:-0.102px;">Pérdidas</span>
<span class="t" id="m-v1" style="left:1303.20px;top:658.00px;font-size:13px;font-weight:400;color:#333;letter-spacing:-0.121px;">$100,000,000.0</span>
<span class="t" id="m-recup2" style="left:1303.20px;top:690.00px;font-size:13px;font-weight:400;color:#333;letter-spacing:-0.166px;">Recuperaciones</span>
<span class="t" id="m-v2" style="left:1303.20px;top:715.00px;font-size:13px;font-weight:400;color:#333;letter-spacing:-0.153px;">$80,000,000.0</span>
<span class="t" id="m-cuant" style="left:1303.20px;top:748.00px;font-size:13px;font-weight:400;color:#333;letter-spacing:-0.123px;">Cuantía neta</span>
<span class="t" id="m-v3" style="left:1303.20px;top:773.00px;font-size:13px;font-weight:400;color:#333;letter-spacing:-0.153px;">$20,000,000.0</span>
<span class="t" id="m-cancel" style="left:1384.40px;top:900.01px;font-size:14px;font-weight:400;color:#333;letter-spacing:0.081px;-webkit-text-stroke:0.45px currentColor;transform:scaleX(0.94);transform-origin:0 0;">Cancelar</span>
<span class="t" id="m-guardar" style="left:1535.20px;top:900.01px;font-size:14px;font-weight:700;color:#fff;letter-spacing:-0.063px;transform:scaleX(0.88);transform-origin:0 0;">Guardar</span>
<span class="t" id="m-cambiar" style="left:1693.30px;top:900.01px;font-size:14px;font-weight:700;color:#fff;letter-spacing:-0.079px;transform:scaleX(0.92);transform-origin:0 0;">Cambiar estado</span>
</div>
</div>
</body></html>
